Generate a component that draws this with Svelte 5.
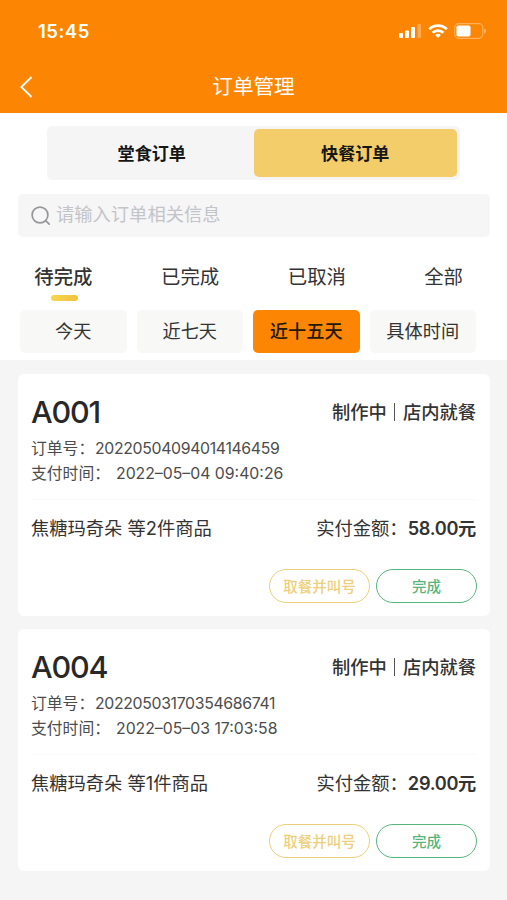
<script>
    let kind = '快餐订单'
    let status = '待完成'
    let range = '近十五天'

    const kinds = ['堂食订单', '快餐订单']
    const statuses = ['待完成', '已完成', '已取消', '全部']
    const ranges = ['今天', '近七天', '近十五天', '具体时间']

    const orders = [
        { code: 'A001', number: '20220504094014146459', paid: '2022–05–04 09:40:26', count: 2, total: '58.00' },
        { code: 'A004', number: '20220503170354686741', paid: '2022–05–03 17:03:58', count: 1, total: '29.00' }
    ]
</script>

<div class="page">
  <header>
    <div class="statusbar">
      <span class="clock">15:45</span>
      <svg class="signal" width="23" height="14" viewBox="0 0 23 14" fill="#fff">
        <rect x="0" y="9" width="4" height="5" rx="1" />
        <rect x="6" y="6.5" width="4" height="7.5" rx="1" />
        <rect x="12" y="3" width="4" height="11" rx="1" />
        <rect x="18.5" y="0" width="3.5" height="14" rx="1" opacity=".3" />
      </svg>
      <svg class="wifi" width="20" height="14" viewBox="0 0 20 14" fill="none" stroke="#fff" stroke-width="2.7">
        <path d="M1.2 5.2a12.6 12.6 0 0 1 17.6 0" />
        <path d="M4.6 8.7a7.8 7.8 0 0 1 10.8 0" />
        <path d="M10 14l-2.9-2.9a4.1 4.1 0 0 1 5.8 0z" fill="#fff" stroke="none" />
      </svg>
      <svg class="battery" width="33" height="16" viewBox="0 0 33 16">
        <rect x=".7" y=".7" width="28.1" height="14.6" rx="4" fill="none" stroke="#fff" stroke-opacity=".35" stroke-width="1.2" />
        <rect x="2.5" y="2.5" width="14" height="11" rx="1.8" fill="#fff" />
        <path d="M30.2 5.5c2.2.8 2.2 4.2 0 5z" fill="#fff" opacity=".45" />
      </svg>
    </div>
    <div class="titlebar">
      <svg class="back" width="14" height="22" viewBox="0 0 14 22" fill="none" stroke="#fff" stroke-width="1.8">
        <path d="M12.6 1L2.3 11l10.3 10" />
      </svg>
      <h1>订单管理</h1>
    </div>
  </header>

  <section class="controls">
    <div class="kinds">
      {#each kinds as name}
        <button class:active={kind === name} on:click={() => kind = name}>{name}</button>
      {/each}
    </div>
    <div class="search">
      <svg width="20" height="20" viewBox="0 0 20 20" fill="none" stroke="#96979b" stroke-width="1.7">
        <circle cx="9" cy="9" r="7.9" />
        <path d="M14.6 14.6l3.6 3.6" stroke-linecap="round" />
      </svg>
      <input type="text" placeholder="请输入订单相关信息" />
    </div>
    <div class="statuses">
      {#each statuses as name}
        <button class:active={status === name} on:click={() => status = name}>{name}</button>
      {/each}
    </div>
    <div class="ranges">
      {#each ranges as name}
        <button class:active={range === name} on:click={() => range = name}>{name}</button>
      {/each}
    </div>
  </section>

  <main>
    {#each orders as order}
      <article>
        <div class="top">
          <h2>{order.code}</h2>
          <p class="state"><span>制作中</span><i></i><span>店内就餐</span></p>
        </div>
        <p class="meta"><span class="label">订单号：</span><span class="number">{order.number}</span></p>
        <p class="meta"><span class="label wide">支付时间：</span><span>{order.paid}</span></p>
        <div class="summary">
          <p>焦糖玛奇朵 等{order.count}件商品</p>
          <p>实付金额：<b>{order.total}元</b></p>
        </div>
        <div class="actions">
          <button class="call">取餐并叫号</button>
          <button class="done">完成</button>
        </div>
      </article>
    {/each}
  </main>
</div>

<style>
:global(body) {
    margin: 0;
    background: #f5f5f5;
}

.page {
    height: 900px;
    overflow: hidden;
    background: #f5f5f5;
    color: #333;
    font-family: Inter, "Noto Sans CJK SC", sans-serif;
}

button, input {
    padding: 0;
    border: 0;
    background: none;
    color: inherit;
    font-family: inherit;
}

button {
    cursor: pointer;
}

h1, h2, p {
    margin: 0;
}

header {
    height: 113px;
    background: #fc8604;
    color: #fff;
}

.statusbar {
    display: flex;
    align-items: center;
    height: 62px;
    padding: 0 20px 0 38px;
}

.clock {
    margin-right: auto;
    font-size: 18.5px;
    font-weight: 600;
    letter-spacing: .5px;
}

.wifi {
    margin: 0 6px;
}

.titlebar {
    display: grid;
    grid-template-columns: 1fr auto 1fr;
    align-items: center;
    height: 50px;
    padding: 0 19px;
}

h1 {
    font-size: 20.6px;
    font-weight: 400;
    line-height: 30px;
}

.controls {
    height: 247px;
    background: #fff;
    overflow: hidden;
}

.kinds {
    display: flex;
    box-sizing: border-box;
    width: 413px;
    height: 54px;
    margin: 13px 0 0 47px;
    padding: 3px;
    border-radius: 5px;
    background: #f5f5f5;
}

.kinds button {
    flex: 1;
    padding-bottom: 1px;
    border-radius: 5px;
    color: #161616;
    font-size: 17.1px;
    font-weight: 700;
}

.kinds .active {
    background: #f3cd69;
}

.search {
    display: flex;
    align-items: center;
    height: 43px;
    margin: 14px 17px 0 18px;
    padding: 0 13px;
    border-radius: 5px;
    background: #f6f6f6;
}

.search input {
    flex: 1;
    height: 30px;
    margin: -4px 0 0 5px;
    outline: 0;
    font-size: 18.3px;
}

.search input::placeholder {
    color: #c3c4c9;
    opacity: 1;
}

.statuses {
    display: flex;
    height: 73px;
}

.statuses button {
    position: relative;
    flex: 1;
    height: 76px;
    font-size: 19.4px;
}

.statuses .active {
    font-weight: 500;
}

.statuses .active::after {
    content: '';
    position: absolute;
    left: 51px;
    top: 58px;
    width: 27px;
    height: 6px;
    border-radius: 3px;
    background: linear-gradient(90deg, #f6d74c, #f1c044);
}

.ranges {
    display: grid;
    grid-template-columns: repeat(4, 1fr);
    gap: 10px;
    height: 43px;
    padding: 0 31px 0 20px;
}

.ranges button {
    padding-bottom: 3px;
    border-radius: 5px;
    background: #f8f8f6;
    font-size: 18.2px;
    white-space: nowrap;
}

.ranges .active {
    background: #fc8604;
    color: #24180a;
    font-weight: 500;
}

main {
    display: flex;
    flex-direction: column;
    gap: 13px;
    padding: 14px 17px 0 18px;
}

article {
    box-sizing: border-box;
    height: 242px;
    padding: 16px 13px 13px;
    border-radius: 6px;
    background: #fff;
}

.top {
    display: flex;
    justify-content: space-between;
    align-items: center;
    height: 42px;
    margin-bottom: 5px;
    padding-right: 1px;
}

h2 {
    color: #282828;
    font-size: 30.5px;
    font-weight: 500;
    letter-spacing: -1.2px;
}

.state {
    display: flex;
    align-items: center;
    font-size: 18.3px;
    font-weight: 500;
}

.state i {
    width: 1px;
    height: 18px;
    margin: 1px 8px 0 7px;
    background: #555;
}

.meta {
    display: flex;
    height: 24.5px;
    color: #4c4c4c;
    font-size: 15.8px;
    line-height: 24.5px;
    white-space: nowrap;
}

.number {
    letter-spacing: -.32px;
}

.label {
    width: 64px;
}

.wide {
    width: 85px;
}

.summary {
    display: flex;
    justify-content: space-between;
    align-items: center;
    height: 56px;
    margin-top: 13px;
    padding: 0 1px 2px 0;
    box-sizing: border-box;
    border-top: 1px solid #fafafa;
    font-size: 18.3px;
}

.summary b {
    font-size: 18.2px;
    font-weight: 600;
    letter-spacing: -.3px;
}

.actions {
    display: flex;
    justify-content: flex-end;
    gap: 6px;
    margin-top: 14px;
}

.actions button {
    box-sizing: border-box;
    width: 101px;
    height: 34px;
    padding-bottom: 2px;
    border: 1.5px solid;
    border-radius: 17px;
    font-size: 14.5px;
    font-weight: 500;
}

.call {
    color: #edcf7b;
}

.done {
    color: #56b57c;
}
</style>
